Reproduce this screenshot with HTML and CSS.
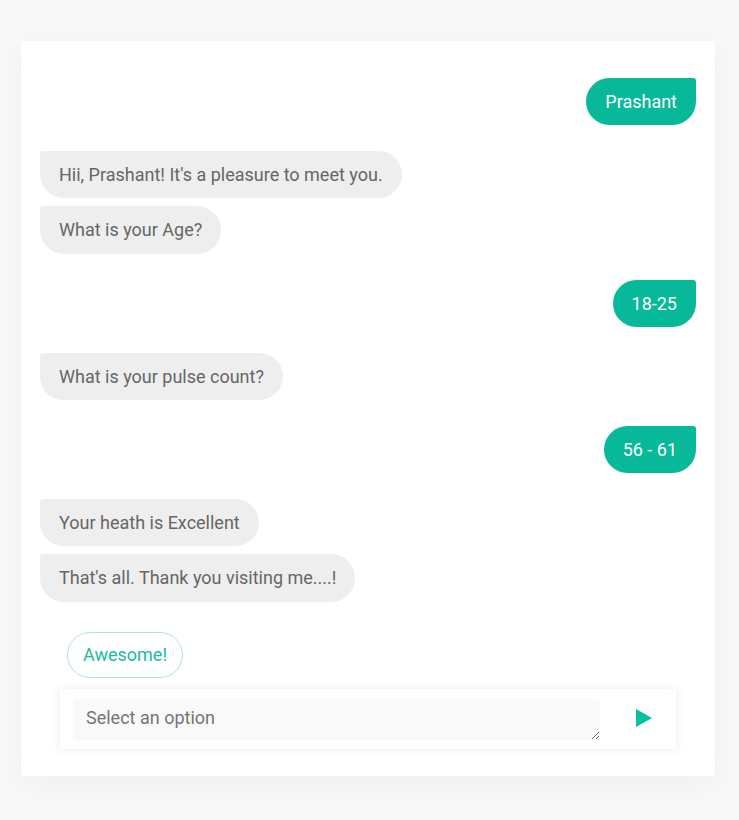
FILE: index.html
```html
<!DOCTYPE html>
<html>
<head>
<meta charset="utf-8">
<link rel="stylesheet" href="styles.css">
</head>
<body>
<div class="card">
  <div class="messages">
    <div class="row user"><div class="bubble">Prashant</div></div>
    <div class="row bot">
      <div class="bubble">Hii, Prashant! It's a pleasure to meet you.</div>
      <div class="bubble">What is your Age?</div>
    </div>
    <div class="row user"><div class="bubble">18-25</div></div>
    <div class="row bot"><div class="bubble">What is your pulse count?</div></div>
    <div class="row user"><div class="bubble">56 - 61</div></div>
    <div class="row bot">
      <div class="bubble">Your heath is Excellent</div>
      <div class="bubble">That's all. Thank you visiting me....!</div>
    </div>
  </div>
  <div class="options">
    <button class="option">Awesome!</button>
  </div>
  <div class="composer">
    <textarea class="input" placeholder="Select an option"></textarea>
    <button class="send" aria-label="Send">
      <svg width="16" height="18" viewBox="0 0 16 18"><polygon points="0,0 16,9 0,18" fill="#06bf9c"/></svg>
    </button>
  </div>
</div>
</body>
</html>
```

FILE: styles.css
```css
html, body {
  margin: 0;
  padding: 0;
  background: #f8f8f8;
  font-family: Roboto, "Liberation Sans", sans-serif;
}
body {
  padding: 41px 24px 44px 21px;
}
.card {
  background: #fff;
  box-shadow: 0 6px 30px rgba(0, 0, 0, 0.04);
  padding: 37px 19px 27px 19px;
}
.messages {
  display: flex;
  flex-direction: column;
  gap: 26px;
}
.row {
  display: flex;
  flex-direction: column;
  gap: 8px;
}
.row.user {
  align-items: flex-end;
}
.row.bot {
  align-items: flex-start;
}
.bubble {
  font-size: 18px;
  line-height: 25.2px;
  padding: 11px 19px;
}
.user .bubble {
  background: #07b899;
  color: #fff;
  border-radius: 24px 3px 24px 24px;
}
.bot .bubble {
  background: #eeeeee;
  color: #666;
  border-radius: 3px 24px 24px 24px;
}
.options {
  display: flex;
  padding: 30px 0 0 27px;
}
.option {
  font-family: Roboto, "Liberation Sans", sans-serif;
  font-size: 18px;
  line-height: 25px;
  color: #1abc9c;
  background: #fff;
  border: 1px solid #b4dfe8;
  border-radius: 23px;
  padding: 9.5px 15px;
  cursor: pointer;
}
.composer {
  margin: 11px 20px 0 20px;
  display: flex;
  align-items: center;
  background: #fff;
  padding: 10px 0 9px 13px;
  box-shadow: 0 0 10px rgba(0, 0, 0, 0.08);
}
.input {
  flex: 1;
  height: 41px;
  box-sizing: border-box;
  border: none;
  outline: none;
  background: #f9f9f9;
  border-radius: 3px;
  font-family: Roboto, "Liberation Sans", sans-serif;
  font-size: 18px;
  line-height: 24px;
  padding: 7px 13px;
  color: #555;
  display: block;
  margin: 0;
}
.input::placeholder {
  color: #757575;
}
.send {
  width: 76px;
  height: 41px;
  border: none;
  background: transparent;
  display: flex;
  align-items: center;
  justify-content: center;
  padding: 0;
  cursor: pointer;
}
.send svg {
  display: block;
  margin-left: 12px;
  margin-top: -3px;
}
```
